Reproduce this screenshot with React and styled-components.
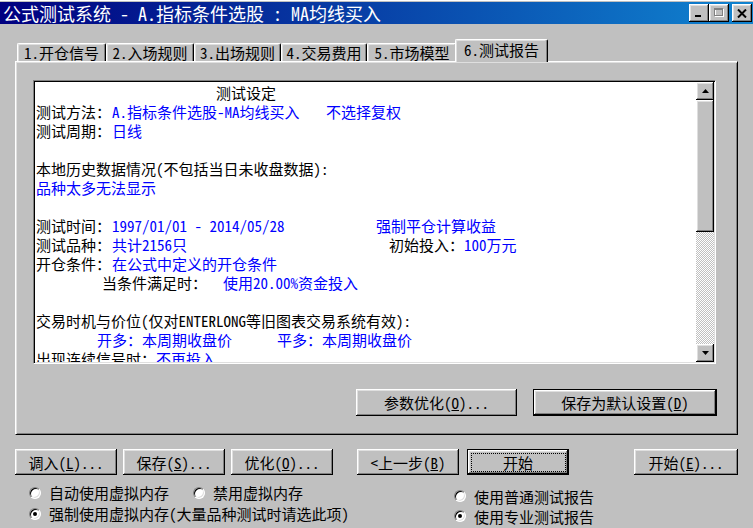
import React from "react";
import styled, { createGlobalStyle, css } from "styled-components";

const FONT = `"Noto Sans Mono CJK SC", "Noto Sans CJK SC", sans-serif`;

const GlobalStyle = createGlobalStyle`
  html, body {
    margin: 0;
    padding: 0;
    background: #c0c0c0;
  }
  body {
    font-family: ${FONT};
    overflow: hidden;
  }
`;

const raised = css`
  box-shadow: inset -1px -1px #000, inset 1px 1px #fff, inset -2px -2px #808080,
    inset 2px 2px #dfdfdf;
`;

const Window = styled.div`
  width: 753px;
  height: 528px;
  background: #c0c0c0;
  border-top: 1px solid #fff;
  padding-top: 1px;
  box-sizing: border-box;
  display: flex;
  flex-direction: column;
`;

const TitleBar = styled.div`
  height: 22px;
  display: flex;
  align-items: center;
  padding: 0 1px 0 3px;
  background: linear-gradient(90deg, #000080, #1084d0);
`;

const TitleText = styled.div`
  flex: 1;
  color: #fff;
  font-size: 18px;
  line-height: 22px;
  white-space: pre;
`;

const Controls = styled.div`
  display: flex;
  align-items: center;
`;

const CtrlButton = styled.div`
  width: 20px;
  height: 18px;
  background: #c0c0c0;
  ${raised};
  display: flex;
  align-items: center;
  justify-content: center;
  margin-left: ${(p) => p.$gap || 0}px;
`;

const TabStrip = styled.div`
  display: flex;
  align-items: flex-end;
  height: 22px;
  margin-top: 15px;
  padding-left: 17px;
  position: relative;
  z-index: 2;
`;

const Tab = styled.div`
  box-sizing: border-box;
  width: ${(p) => p.$w}px;
  height: 18px;
  font-size: 15px;
  line-height: 17px;
  text-align: center;
  white-space: pre;
  border-left: 1px solid #fff;
  border-top: 1px solid #fff;
  border-right: 1px solid #000;
  border-radius: 2px 2px 0 0;
  box-shadow: inset -1px 0 #808080, inset 1px 1px #dfdfdf;
  ${(p) =>
    p.$active &&
    css`
      height: 23px;
      margin-left: -2px;
      margin-bottom: -1px;
      line-height: 19px;
      background: #c0c0c0;
    `}
`;

const Panel = styled.div`
  margin: 0 15px;
  height: 374px;
  box-sizing: border-box;
  border: 1px solid;
  border-color: #fff #000 #000 #fff;
  box-shadow: inset 1px 1px #dfdfdf, inset -1px -1px #808080;
  padding: 18px 20px 0 17px;
  display: flex;
  flex-direction: column;
`;

const TextBox = styled.div`
  width: 683px;
  height: 284px;
  box-sizing: border-box;
  background: #fff;
  border: 1px solid;
  border-color: #808080 #fff #fff #808080;
  box-shadow: inset 1px 1px #000, inset -1px -1px #dfdfdf;
  padding: 1px;
  display: flex;
`;

const Report = styled.div`
  flex: 1;
  overflow: hidden;
  padding: 1px 0 0 1px;
  font-size: 15px;
  line-height: 19px;
`;

const Line = styled.div`
  height: 19px;
  white-space: pre;
`;

const Seg = styled.span`
  display: inline-block;
  width: ${(p) => (p.$w ? `${p.$w}px` : "auto")};
  color: ${(p) => (p.$blue ? "#0000ff" : "#000")};
`;

const ScrollBar = styled.div`
  width: 18px;
  display: flex;
  flex-direction: column;
`;

const ScrollBtn = styled.div`
  height: 18px;
  background: #c0c0c0;
  ${raised};
  display: flex;
  align-items: center;
  justify-content: center;
`;

const Thumb = styled.div`
  height: 132px;
  background: #c0c0c0;
  ${raised};
`;

const Track = styled.div`
  flex: 1;
  background: repeating-conic-gradient(#c0c0c0 0 25%, #fff 0 50%) 0 0 / 2px 2px;
`;

const ButtonRow = styled.div`
  display: flex;
  justify-content: ${(p) => p.$justify || "flex-start"};
  gap: ${(p) => p.$gap || 0}px;
  margin-top: ${(p) => p.$top || 0}px;
  margin-left: ${(p) => p.$left || 0}px;
`;

const Button = styled.div`
  position: relative;
  box-sizing: border-box;
  width: ${(p) => p.$w}px;
  height: ${(p) => p.$h || 26}px;
  background: #c0c0c0;
  font-size: 15px;
  display: flex;
  align-items: center;
  justify-content: center;
  white-space: pre;
  ${raised};
  ${(p) =>
    p.$default &&
    css`
      box-shadow: inset 0 0 0 1px #000, inset -2px -2px #000, inset 2px 2px #fff,
        inset -3px -3px #808080, inset 3px 3px #dfdfdf;
    `}
  ${(p) =>
    p.$focus &&
    css`
      &::after {
        content: "";
        position: absolute;
        inset: 4px 3px 3px 4px;
        border: 1px dotted #000;
      }
    `}
`;

const Bottom = styled.div`
  padding: 14px 15px 0 15px;
`;

const BottomButtons = styled.div`
  display: flex;
`;

const Spacer = styled.div`
  flex: 1;
`;

const Options = styled.div`
  display: flex;
  padding-left: 14px;
`;

const RadioGroup = styled.div`
  display: flex;
  flex-direction: column;
  margin-top: ${(p) => p.$top || 0}px;
  margin-left: ${(p) => p.$left || 0}px;
`;

const RadioRow = styled.div`
  display: flex;
  height: ${(p) => p.$h}px;
  align-items: center;
`;

const RadioItem = styled.label`
  display: flex;
  align-items: center;
  gap: 8px;
  width: ${(p) => (p.$w ? `${p.$w}px` : "auto")};
  font-size: 15px;
  white-space: pre;
`;

const RadioDot = styled.span`
  position: relative;
  width: 12px;
  height: 12px;
  box-sizing: border-box;
  border-radius: 50%;
  background: #fff;
  border: 1px solid;
  border-color: #808080 #fff #fff #808080;
  box-shadow: inset 1px 1px #000, inset -1px -1px #dfdfdf;
  ${(p) =>
    p.$checked &&
    css`
      &::after {
        content: "";
        position: absolute;
        left: 3px;
        top: 3px;
        width: 4px;
        height: 4px;
        border-radius: 50%;
        background: #000;
      }
    `}
`;

const tabs = [
  { label: "1.开仓信号", w: 89 },
  { label: "2.入场规则", w: 88 },
  { label: "3.出场规则", w: 87 },
  { label: "4.交易费用", w: 86 },
  { label: "5.市场模型", w: 90 },
  { label: "6.测试报告", w: 93, active: true },
];

const report = [
  [{ t: "", w: 180 }, { t: "测试设定" }],
  [
    { t: "测试方法：", w: 76 },
    { t: "A.指标条件选股-MA均线买入", w: 214, blue: true },
    { t: "不选择复权", blue: true },
  ],
  [{ t: "测试周期：", w: 76 }, { t: "日线", blue: true }],
  [],
  [{ t: "本地历史数据情况(不包括当日未收盘数据):" }],
  [{ t: "品种太多无法显示", blue: true }],
  [],
  [
    { t: "测试时间：", w: 76 },
    { t: "1997/01/01 - 2014/05/28", w: 264, blue: true },
    { t: "强制平仓计算收益", blue: true },
  ],
  [
    { t: "测试品种：", w: 76 },
    { t: "共计2156只", w: 277, blue: true },
    { t: "初始投入：", w: 75 },
    { t: "100万元", blue: true },
  ],
  [{ t: "开仓条件：", w: 76 }, { t: "在公式中定义的开仓条件", blue: true }],
  [
    { t: "", w: 66 },
    { t: "当条件满足时：", w: 121 },
    { t: "使用20.00%资金投入", blue: true },
  ],
  [],
  [{ t: "交易时机与价位(仅对ENTERLONG等旧图表交易系统有效):" }],
  [
    { t: "", w: 61 },
    { t: "开多：本周期收盘价", w: 180, blue: true },
    { t: "平多：本周期收盘价", blue: true },
  ],
  [{ t: "出现连续信号时：", w: 120 }, { t: "不再投入", blue: true }],
];

const Arrow = ({ down }) => (
  <svg width="7" height="4" viewBox="0 0 7 4">
    <polygon points={down ? "0,0 7,0 3.5,4" : "0,4 7,4 3.5,0"} fill="#000" />
  </svg>
);

const Mn = ({ pre, k, post }) => (
  <span>
    {pre}(<u>{k}</u>){post}
  </span>
);

export default function App() {
  return (
    <>
      <GlobalStyle />
      <Window>
        <TitleBar>
          <TitleText>公式测试系统 - A.指标条件选股 : MA均线买入</TitleText>
          <Controls>
            <CtrlButton>
              <svg width="12" height="10" viewBox="0 0 12 10">
                <rect x="2" y="7" width="6" height="2" fill="#000" />
              </svg>
            </CtrlButton>
            <CtrlButton>
              <svg width="12" height="10" viewBox="0 0 12 10">
                <rect x="2.5" y="1.5" width="8" height="7" fill="none" stroke="#fff" />
                <rect x="1.5" y="0.5" width="8" height="7" fill="none" stroke="#808080" />
                <line x1="1.5" y1="1.5" x2="9.5" y2="1.5" stroke="#808080" />
              </svg>
            </CtrlButton>
            <CtrlButton $gap={3}>
              <svg width="10" height="9" viewBox="0 0 10 9">
                <path d="M1 0.5 L9 8.5 M9 0.5 L1 8.5" stroke="#000" strokeWidth="2" />
              </svg>
            </CtrlButton>
          </Controls>
        </TitleBar>

        <TabStrip>
          {tabs.map((t) => (
            <Tab key={t.label} $w={t.w} $active={t.active}>
              {t.label}
            </Tab>
          ))}
        </TabStrip>

        <Panel>
          <TextBox>
            <Report>
              {report.map((segs, i) => (
                <Line key={i}>
                  {segs.map((s, j) => (
                    <Seg key={j} $w={s.w} $blue={s.blue}>
                      {s.t}
                    </Seg>
                  ))}
                </Line>
              ))}
            </Report>
            <ScrollBar>
              <ScrollBtn>
                <Arrow />
              </ScrollBtn>
              <Thumb />
              <Track />
              <ScrollBtn>
                <Arrow down />
              </ScrollBtn>
            </ScrollBar>
          </TextBox>
          <ButtonRow $justify="flex-end" $gap={16} $top={25}>
            <Button $w={161} $h={27}>
              <Mn pre="参数优化" k="O" post="..." />
            </Button>
            <Button $w={184} $h={27} $default>
              <Mn pre="保存为默认设置" k="D" post="" />
            </Button>
          </ButtonRow>
        </Panel>

        <Bottom>
          <BottomButtons>
            <ButtonRow $gap={6}>
              <Button $w={102}>
                <Mn pre="调入" k="L" post="..." />
              </Button>
              <Button $w={102}>
                <Mn pre="保存" k="S" post="..." />
              </Button>
              <Button $w={102}>
                <Mn pre="优化" k="O" post="..." />
              </Button>
            </ButtonRow>
            <ButtonRow $gap={8} $left={24}>
              <Button $w={102}>
                <Mn pre="<上一步" k="B" post="" />
              </Button>
              <Button $w={102} $default $focus>
                开始
              </Button>
            </ButtonRow>
            <Spacer />
            <Button $w={104}>
              <Mn pre="开始" k="E" post="..." />
            </Button>
          </BottomButtons>
          <Options>
            <RadioGroup $top={7}>
              <RadioRow $h={21}>
                <RadioItem $w={164}>
                  <RadioDot />
                  自动使用虚拟内存
                </RadioItem>
                <RadioItem>
                  <RadioDot />
                  禁用虚拟内存
                </RadioItem>
              </RadioRow>
              <RadioRow $h={21}>
                <RadioItem>
                  <RadioDot $checked />
                  强制使用虚拟内存(大量品种测试时请选此项)
                </RadioItem>
              </RadioRow>
            </RadioGroup>
            <RadioGroup $top={11} $left={105}>
              <RadioRow $h={20}>
                <RadioItem>
                  <RadioDot />
                  使用普通测试报告
                </RadioItem>
              </RadioRow>
              <RadioRow $h={20}>
                <RadioItem>
                  <RadioDot $checked />
                  使用专业测试报告
                </RadioItem>
              </RadioRow>
            </RadioGroup>
          </Options>
        </Bottom>
      </Window>
    </>
  );
}
